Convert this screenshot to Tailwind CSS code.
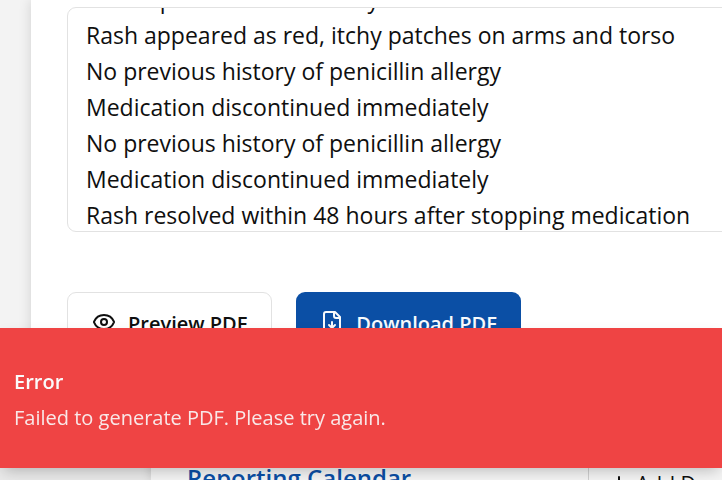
<!DOCTYPE html>
<html lang="en">
<head>
<meta charset="utf-8">
<title>Report</title>
<script src="https://cdn.jsdelivr.net/npm/@tailwindcss/browser@4"></script>
</head>
<body class="h-screen overflow-hidden bg-[#f3f3f3] font-['Segoe_UI','Open_Sans','Noto_Sans',sans-serif] text-[#0f0f0f]">
<div class="flex h-full flex-col overflow-hidden">
  <main class="h-[400px] shrink-0 pl-[31px]">
    <section class="h-full bg-white pt-[7px] pl-9 shadow-[0_0_12px_rgba(0,0,0,0.14)]">
      <label for="notes" class="sr-only">Reaction details</label>
      <textarea id="notes" class="block h-[225px] w-[150%] resize-none overflow-hidden rounded-[9px] border border-[#e2e2e2] bg-white px-[18px] py-3 text-[23px] leading-9 whitespace-pre outline-none">Developed rash on one day
Rash appeared as red, itchy patches on arms and torso
No previous history of penicillin allergy
Medication discontinued immediately
No previous history of penicillin allergy
Medication discontinued immediately
Rash resolved within 48 hours after stopping medication</textarea>
      <div class="mt-[60px] flex gap-6 text-[20px] leading-[30px] font-semibold">
        <button type="button" class="flex h-[60px] items-center gap-3 rounded-[9px] border border-[#e2e2e2] bg-white px-6">
          <svg class="size-6" viewBox="0 0 24 24" fill="none" stroke="currentColor" stroke-width="2" stroke-linecap="round" stroke-linejoin="round" aria-hidden="true"><path d="M2.062 12.348a1 1 0 0 1 0-.696 10.75 10.75 0 0 1 19.876 0 1 1 0 0 1 0 .696 10.75 10.75 0 0 1-19.876 0"/><circle cx="12" cy="12" r="3"/></svg>
          <span class="pt-1">Preview PDF</span>
        </button>
        <button type="button" class="flex h-[60px] items-center gap-3 rounded-[9px] bg-[#0b4fa5] px-6 text-[#f8fafc]">
          <svg class="size-6" viewBox="0 0 24 24" fill="none" stroke="currentColor" stroke-width="2" stroke-linecap="round" stroke-linejoin="round" aria-hidden="true"><path d="M15 2H6a2 2 0 0 0-2 2v16a2 2 0 0 0 2 2h12a2 2 0 0 0 2-2V7Z"/><path d="M14 2v4a2 2 0 0 0 2 2h4"/><path d="M12 18v-6"/><path d="m9 15 3 3 3-3"/></svg>
          <span class="pt-1">Download PDF</span>
        </button>
      </div>
    </section>
  </main>
  <div class="flex h-20 shrink-0 bg-[#e9e9e9] pl-[151px]">
    <section class="flex flex-1 items-end bg-[#f4f4f4] pl-9 shadow-[0_0_10px_rgba(0,0,0,0.15)]">
      <h2 class="-mb-4 w-[401px] shrink-0 text-[24px] leading-9 font-semibold text-[#0b4fa5]">Reporting Calendar</h2>
      <div class="-mb-[22px] flex h-[100px] shrink-0 items-end border-l border-[#cfcfcf] pl-[21px]">
        <button type="button" class="flex items-center gap-2 text-[21px] leading-9 font-medium whitespace-nowrap">
          <svg class="size-[18px]" viewBox="0 0 18 18" fill="none" stroke="currentColor" stroke-width="2" stroke-linecap="round" aria-hidden="true"><path d="M2 9h14M9 2v14"/></svg>
          Add Dose
        </button>
      </div>
    </section>
  </div>
</div>
<div role="alert" class="fixed inset-x-0 bottom-3 flex h-[140px] flex-col justify-center bg-[#ef4444] pt-1 pl-3.5 text-[20px] leading-[30px] text-[#fafafa] shadow-[0_6px_14px_-4px_rgba(0,0,0,0.25)]">
  <p class="font-semibold">Error</p>
  <p class="mt-1.5 opacity-90">Failed to generate PDF. Please try again.</p>
</div>
<script>document.getElementById('notes').scrollTop = 39;</script>
</body>
</html>
